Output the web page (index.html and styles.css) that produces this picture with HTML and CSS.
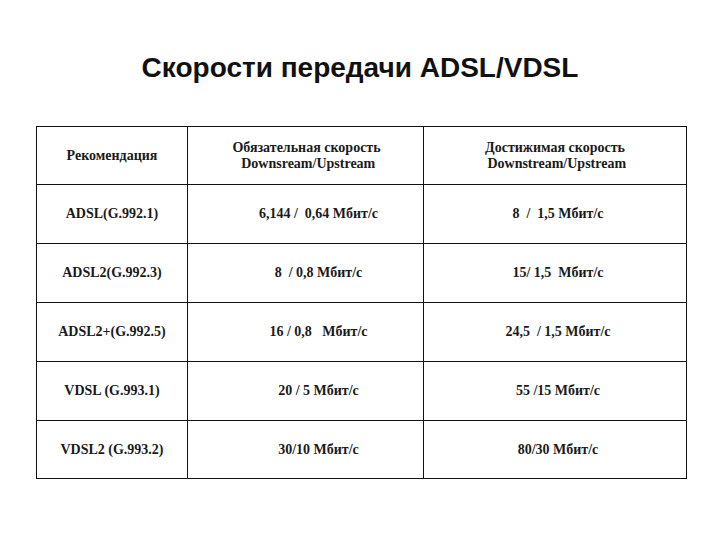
FILE: index.html
```html
<!DOCTYPE html>
<html lang="ru">
<head>
<meta charset="utf-8">
<link rel="stylesheet" href="styles.css">
</head>
<body>
<h1 class="title">Скорости передачи ADSL/VDSL</h1>
<table class="speeds">
  <colgroup>
    <col class="c1"><col class="c2"><col class="c3">
  </colgroup>
  <tr class="head">
    <td>Рекомендация</td>
    <td class="h2">Обязательная скорость<br> Downsream/Upstream</td>
    <td class="h3">Достижимая скорость<br> Downstream/Upstream</td>
  </tr>
  <tr><td>ADSL(G.992.1)</td><td class="m">6,144 /  0,64 Мбит/с</td><td class="d">8  /  1,5 Мбит/с</td></tr>
  <tr><td>ADSL2(G.992.3)</td><td class="m">8  / 0,8 Мбит/с</td><td class="d">15/ 1,5  Мбит/с</td></tr>
  <tr><td>ADSL2+(G.992.5)</td><td class="m">16 / 0,8   Мбит/с</td><td class="d">24,5  / 1,5 Мбит/с</td></tr>
  <tr><td>VDSL (G.993.1)</td><td class="m">20 / 5 Мбит/с</td><td class="d">55 /15 Мбит/с</td></tr>
  <tr class="last"><td>VDSL2 (G.993.2)</td><td class="m">30/10 Мбит/с</td><td class="d">80/30 Мбит/с</td></tr>
</table>
</body>
</html>
```
FILE: styles.css
```css
html, body {
  margin: 0;
  padding: 0;
  background: #ffffff;
}
.title {
  margin: 0 0 42px 0;
  padding-top: 52px;
  font-family: "Liberation Sans", Arial, sans-serif;
  font-weight: bold;
  font-size: 28px;
  line-height: 32px;
  text-align: center;
  color: #111;
}
.speeds {
  margin-left: 36px;
  border-collapse: collapse;
  table-layout: fixed;
  width: 650px;
  font-family: "Liberation Serif", "Times New Roman", serif;
  font-weight: bold;
  font-size: 14px;
  color: #1a1a1a;
}
.c1 { width: 151px; }
.c2 { width: 236px; }
.c3 { width: 263px; }
.speeds td {
  border: 1px solid #111;
  height: 58px;
  padding: 0;
  text-align: center;
  vertical-align: middle;
  white-space: pre;
  line-height: 16px;
}
.speeds .head td { height: 57px; }
.speeds td.h2 { padding-left: 2px; }
.speeds td.m { padding-left: 26px; }
.speeds td.d { padding-left: 6px; }
.speeds .last td { height: 57px; }
```
